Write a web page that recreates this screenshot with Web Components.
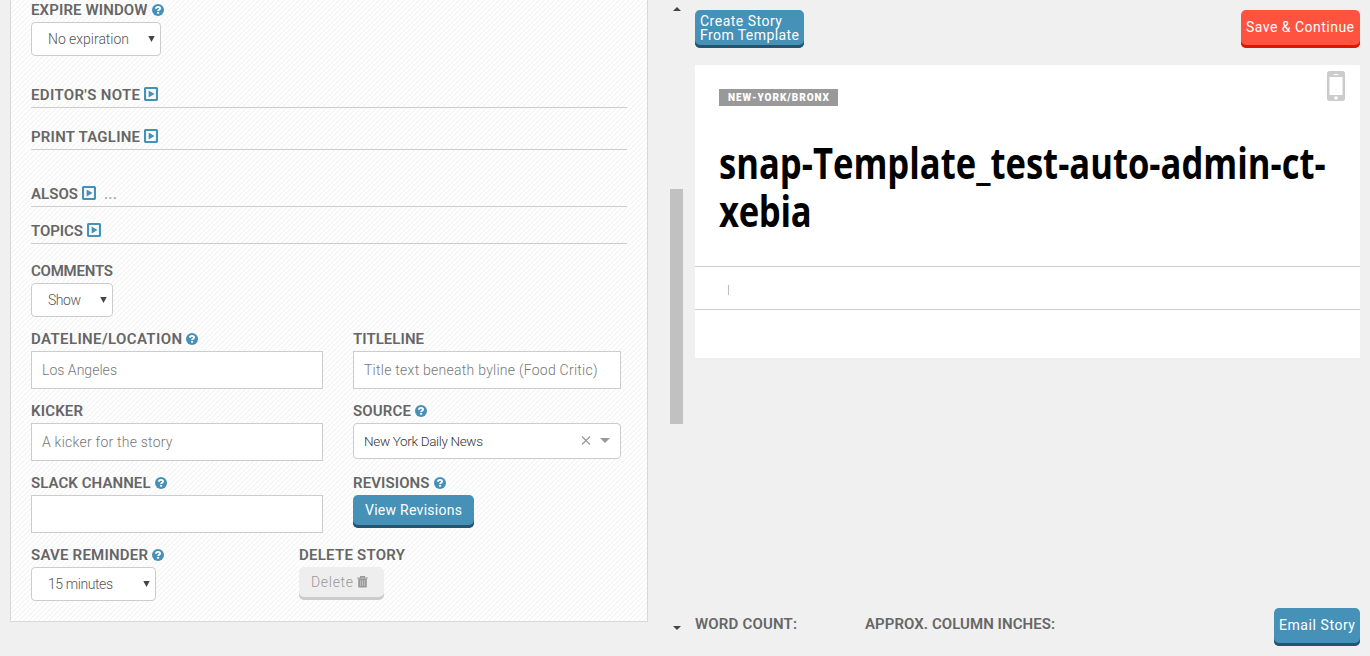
<!DOCTYPE html>
<html lang="en">
<head>
<meta charset="utf-8">
<title>Story editor</title>
<style>
html,body{margin:0;height:100%;overflow:hidden;background:#f0f0f0}
body{font-family:Roboto,"Liberation Sans",sans-serif;color:#666}
</style>
</head>
<body>
<story-editor></story-editor>
<script>
function define(name, html, setup) {
  const tpl = document.createElement('template');
  tpl.innerHTML = html;
  customElements.define(name, class extends HTMLElement {
    connectedCallback() {
      if (this.shadowRoot) return;
      this.attachShadow({mode: 'open'}).append(tpl.content.cloneNode(true));
      if (setup) setup.call(this, this.shadowRoot);
    }
  });
}

// Tracks a line of text out to a set width. With "condense" the letters are
// set smaller and stretched upwards instead, which gives a condensed face.
define('fit-text', `<style>
:host{display:inline-block;white-space:nowrap;flex:none}
span{display:inline-block;vertical-align:top;transform-origin:0 0}
</style><span><slot></slot></span>`, function (root) {
  const s = root.querySelector('span');
  const w = +this.getAttribute('w');
  this.style.width = w + 'px';
  const natural = s.getBoundingClientRect().width;
  if (this.hasAttribute('condense')) {
    const k = w / natural;
    s.style.fontSize = k + 'em';
    s.style.transform = 'scaleY(' + 1 / k + ')';
  } else s.style.letterSpacing = (w - natural) / (this.textContent.trim().length - 1) + 'px';
});

define('help-icon', `<style>:host{display:block;width:12px;height:12px;flex:none}svg{display:block}</style>
<svg width="12" height="12" viewBox="0 0 12 12"><circle cx="6" cy="6" r="6" fill="#4591b8"/>
<path d="M4 4.7C4 3.5 4.9 2.9 6 2.9s2.1.6 2.1 1.6c0 1.2-2 1.2-2 2.6" fill="none" stroke="#fff" stroke-width="1.9"/><rect x="5.1" y="7.9" width="2" height="1.8" fill="#fff"/></svg>`);

define('expand-icon', `<style>:host{display:block;width:14px;height:14px;flex:none}svg{display:block}</style>
<svg width="14" height="14" viewBox="0 0 14 14"><rect x="1" y="1" width="12" height="12" rx="1.2" fill="none" stroke="#4591b8" stroke-width="2.2"/><path d="M4.6 3.4v7.2L10.6 7z" fill="#4591b8"/></svg>`);

define('field-label', `<style>
:host{display:flex;align-items:center;height:19px;gap:4px;font:600 15px/19px Roboto,"Liberation Sans",sans-serif;color:#666}
fit-text{padding-top:2px;height:17px;line-height:17px}
help-icon{margin-top:1px}
expand-icon{margin-bottom:1px}
.dots{color:#aaa;font-weight:500;letter-spacing:.2px;margin-left:4px;padding-top:1px}
[hidden]{display:none}
</style><fit-text></fit-text><help-icon hidden></help-icon><expand-icon hidden></expand-icon><span class="dots" hidden>...</span>`, function (root) {
  const old = root.querySelector('fit-text');
  const t = document.createElement('fit-text');
  t.setAttribute('w', this.getAttribute('w'));
  t.textContent = this.getAttribute('text');
  old.replaceWith(t);
  root.querySelector('help-icon').hidden = !this.hasAttribute('help');
  root.querySelector('expand-icon').hidden = !this.hasAttribute('expand');
  root.querySelector('.dots').hidden = !this.hasAttribute('dots');
});

define('form-field', `<style>:host{display:flex;flex-direction:column;align-items:flex-start;gap:3px}</style><slot></slot>`);
define('form-section', `<style>:host{display:block;width:596px;padding-bottom:3px;border-bottom:1px solid #ccc}</style><slot></slot>`);

define('select-box', `<style>
:host{display:flex;align-items:center;justify-content:space-between;box-sizing:border-box;height:34px;padding:0 5px 0 16px;border:1px solid #ccc;border-radius:4px;background:#fff;font:300 14px/20px Roboto,"Liberation Sans",sans-serif;color:#555}
svg{display:block}
</style><slot></slot><svg width="7" height="6" viewBox="0 0 7 6"><path d="M.3 0h6.4L3.5 6z" fill="#444"/></svg>`);

define('text-input', `<style>
:host{display:flex;align-items:center;box-sizing:border-box;height:38px;padding:0 10px;border:1px solid #ccc;background:#fff;font:300 14px/20px Roboto,"Liberation Sans",sans-serif;color:#777}
</style><slot></slot>`);

define('combo-box', `<style>
:host{display:flex;align-items:center;box-sizing:border-box;height:36px;width:268px;padding:0 10px;border:1px solid #ccc;border-radius:4px;background:#fff;font:300 13.5px/20px Roboto,"Liberation Sans",sans-serif;color:#333}
.x{margin:-1px 9px 0 auto}.a{margin-top:-1px}
svg{display:block}
</style><slot></slot><svg class="x" width="10" height="9" viewBox="0 0 10 9"><path d="M1 .5l8 8M9 .5l-8 8" stroke="#999" stroke-width="1.2"/></svg><svg class="a" width="10" height="5" viewBox="0 0 10 5"><path d="M0 0h10L5 5z" fill="#999"/></svg>`);

define('push-button', `<style>
:host{display:flex;align-items:center;box-sizing:border-box;border-radius:5px;background:var(--face,#4591b8);box-shadow:inset 0 -3px var(--edge,#24546e);color:var(--ink,#fff);font:400 14px/14px Roboto,"Liberation Sans",sans-serif;padding-bottom:4px}
</style><slot></slot>`);

define('settings-form', `<style>
:host{display:block;box-sizing:border-box;width:638px;height:622px;padding:0 20px;border:1px solid #d8d8d8;border-top:0;
background:linear-gradient(135deg,#fff 25%,#f6f6f6 25% 50%,#fff 50% 75%,#f6f6f6 75%) 0 0/5px 5px}
.row{display:flex;margin-top:12px}
.c1{width:322px}.c2{width:268px}
</style>
<form-field><field-label text="EXPIRE WINDOW" w="116.5" help></field-label><select-box style="width:130px"><fit-text w="81">No expiration</fit-text></select-box></form-field>
<form-section style="margin-top:29px"><field-label text="EDITOR'S NOTE" w="109" expand></field-label></form-section>
<form-section style="margin-top:19px"><field-label text="PRINT TAGLINE" w="109" expand></field-label></form-section>
<form-section style="margin-top:34px"><field-label text="ALSOS" w="47" expand dots></field-label></form-section>
<form-section style="margin-top:14px"><field-label text="TOPICS" w="52" expand></field-label></form-section>
<form-field style="margin-top:17px"><field-label text="COMMENTS" w="82"></field-label><select-box style="width:82px"><fit-text w="33">Show</fit-text></select-box></form-field>
<div class="row">
<form-field class="c1"><field-label text="DATELINE/LOCATION" w="151" help></field-label><text-input style="width:292px"><fit-text w="75">Los Angeles</fit-text></text-input></form-field>
<form-field class="c2"><field-label text="TITLELINE" w="71"></field-label><text-input style="width:268px"><fit-text w="233.5">Title text beneath byline (Food Critic)</fit-text></text-input></form-field>
</div>
<div class="row">
<form-field class="c1"><field-label text="KICKER" w="52"></field-label><text-input style="width:292px"><fit-text w="130.5">A kicker for the story</fit-text></text-input></form-field>
<form-field class="c2"><field-label text="SOURCE" w="58" help></field-label><combo-box><fit-text w="119">New York Daily News</fit-text></combo-box></form-field>
</div>
<div class="row">
<form-field class="c1"><field-label text="SLACK CHANNEL" w="119.5" help></field-label><text-input style="width:292px"></text-input></form-field>
<form-field class="c2"><field-label text="REVISIONS" w="76.5" help></field-label><push-button style="width:121px;height:33px;padding-left:12px"><fit-text w="97">View Revisions</fit-text></push-button></form-field>
</div>
<div class="row">
<form-field style="width:268px"><field-label text="SAVE REMINDER" w="117" help></field-label><select-box style="width:125px"><fit-text w="65">15 minutes</fit-text></select-box></form-field>
<form-field><field-label text="DELETE STORY" w="106"></field-label><push-button style="width:85px;height:33px;padding-left:12px;gap:4px;--face:#eee;--edge:#ccc;--ink:#999"><fit-text w="42" style="font-weight:300">Delete</fit-text><svg width="11" height="12" viewBox="0 0 11 12"><path d="M3.6 1.6V.6h3.8v1M.3 2.2h10.4" stroke="#999" stroke-width="1.2" fill="none"/><path d="M1.2 3h8.6v7.6q0 1-1 1H2.2q-1 0-1-1z" fill="#999"/><path d="M3.6 4.3v5.6M5.5 4.3v5.6M7.4 4.3v5.6" stroke="#ccc" stroke-width=".8"/></svg></push-button></form-field>
</div>`);

define('scroll-track', `<style>
:host{display:flex;flex-direction:column;align-items:center;width:13px;height:656px}
svg{display:block}
.up{margin-top:7px}.thumb{width:13px;height:235px;background:#c1c1c1;margin:178px 0 202px}
</style><svg class="up" width="8" height="4" viewBox="0 0 8 4"><path d="M0 4L4 0l4 4z" fill="#444"/></svg><div class="thumb"></div><svg width="8" height="4" viewBox="0 0 8 4"><path d="M0 0h8L4 4z" fill="#444"/></svg>`);

define('story-preview', `<style>
:host{display:block;height:293px;background:#fff}
.head{box-sizing:border-box;height:201px;padding:6px 15px 0 24px;display:flex;justify-content:space-between;align-items:flex-start}
.tag{box-sizing:border-box;display:block;width:119px;height:17px;margin-top:18px;padding-left:9px;background:#999;color:#fff;font:900 10px/17px Roboto,"Liberation Sans",sans-serif}
h1{margin:33px 0 0;height:96px;font:700 43.5px/1.1034 "Open Sans",sans-serif;color:#000}
h1 fit-text{display:block}
.last{letter-spacing:-.3px}
.byline{box-sizing:border-box;height:44px;border:solid #ccc;border-width:1px 0;padding:18px 0 0 33px}
.byline i{display:block;width:1px;height:10px;background:#d0b4bc}
svg{display:block;flex:none}
</style>
<div class="head"><div><span class="tag"><fit-text w="101">NEW-YORK/BRONX</fit-text></span>
<h1><fit-text w="607" condense>snap-Template_test-auto-admin-ct-<br><span class="last">xebia</span></fit-text></h1></div>
<svg width="18" height="30" viewBox="0 0 18 30"><rect width="18" height="30" rx="2.5" fill="#ccc"/><rect x="2.5" y="6" width="13" height="18" fill="#fff"/><rect x="6.5" y="3" width="5" height="1" fill="#fff"/><circle cx="9" cy="27" r="1.8" fill="#fff"/></svg></div>
<div class="byline"><i></i></div>`);

define('story-editor', `<style>
:host{display:flex;box-sizing:border-box;height:656px;padding-left:10px}
scroll-track{margin:0 12px 0 22px}
.right{width:665px;height:656px}
.bar{display:flex;justify-content:space-between;height:38px;padding:10px 0 17px}
.foot{display:flex;height:38px;margin-top:250px}
.foot field-label{margin-top:6px}
.foot push-button{margin-left:auto}
.two{display:flex;flex-direction:column;line-height:14px;padding-top:1px}
</style>
<settings-form></settings-form><scroll-track></scroll-track>
<div class="right">
<div class="bar"><push-button style="width:109px;padding-left:5px"><span class="two"><fit-text w="82">Create Story</fit-text><fit-text w="99">From Template</fit-text></span></push-button>
<push-button style="width:119px;padding-left:5px;--face:#ff5340;--edge:#e01700"><fit-text w="108">Save &amp; Continue</fit-text></push-button></div>
<story-preview></story-preview>
<div class="foot"><field-label text="WORD COUNT:" w="102" style="width:170px"></field-label><field-label text="APPROX. COLUMN INCHES:" w="190"></field-label>
<push-button style="width:86px;padding-left:5px"><fit-text w="76">Email Story</fit-text></push-button></div>
</div>`);
</script>
</body>
</html>
